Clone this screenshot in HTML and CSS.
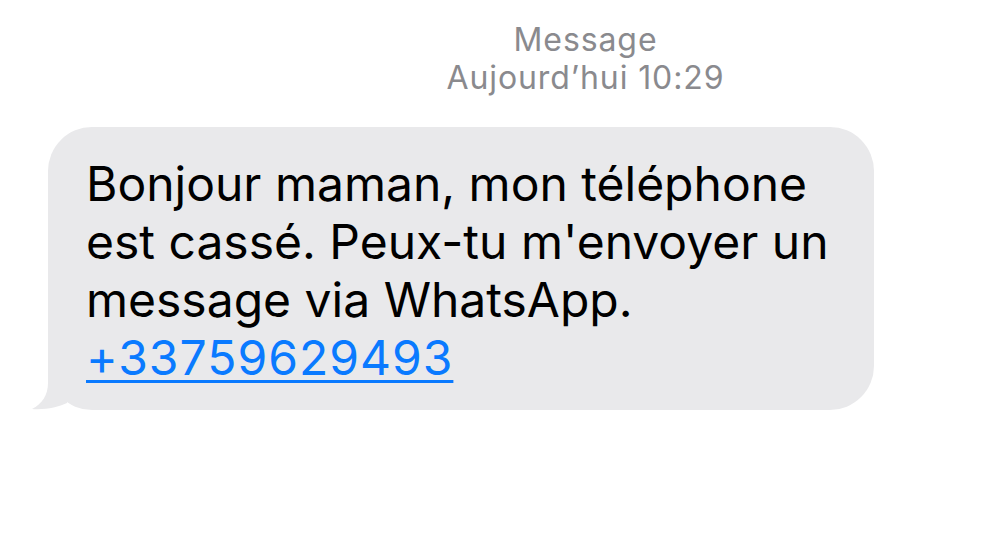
FILE: index.html
```html
<!DOCTYPE html>
<html lang="fr">
<head>
    <meta charset="UTF-8">
    <title>Message</title>
    <link rel="stylesheet" href="styles.css">
</head>
<body>
    <div class="thread-head">
        <div class="sender">Message</div>
        <div class="stamp">Aujourd’hui 10:29</div>
    </div>

    <div class="thread">
        <div class="bubble">
            <p class="text">Bonjour maman, mon téléphone<br>est cassé. Peux-tu m'envoyer un<br>message via WhatsApp.<br><a href="tel:+33759629493">+33759629493</a></p>
            <svg class="tail" width="60" height="51" viewBox="0 0 60 51">
                <path d="M18 0 L18 24 C18 36 12 45 2 50 C16 51 28 48 37 44 L37 0 Z" fill="#e9e9eb"/>
            </svg>
        </div>
    </div>
</body>
</html>
```

FILE: styles.css
```css
body {
    margin: 0;
    padding: 0;
    background-color: #ffffff;
    font-family: 'Inter', 'Liberation Sans', sans-serif;
    color: #000000;
}
.thread-head {
    padding: 21px 0 0 176px;
    text-align: center;
    color: #8a8a8e;
    font-size: 32px;
    line-height: 38px;
    letter-spacing: 0.9px;
}
.thread {
    padding: 30px 0 0 48px;
}
.bubble {
    position: relative;
    width: 826px;
    box-sizing: border-box;
    padding: 28px 20px 23px 38px;
    background-color: #e9e9eb;
    border-radius: 44px;
}
.text {
    margin: 0;
    font-size: 48px;
    line-height: 58px;
}
.text a {
    color: #0a7aff;
    letter-spacing: 1px;
    text-decoration: underline;
    text-decoration-thickness: 3px;
    text-underline-offset: 5px;
}
.tail {
    position: absolute;
    left: -18px;
    bottom: 0;
}
```
